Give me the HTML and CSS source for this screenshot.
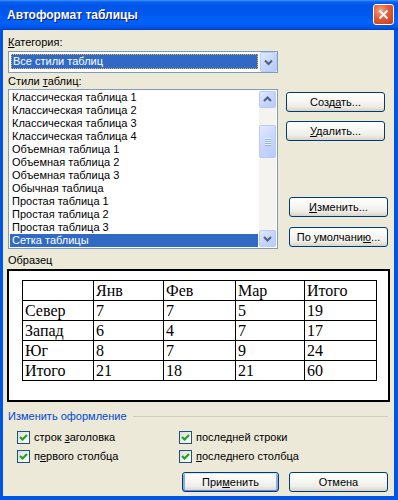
FILE: index.html
```html
<!DOCTYPE html>
<html lang="ru">
<head>
    <meta charset="UTF-8">
    <title>Автоформат таблицы</title>
    <link rel="stylesheet" href="styles.css">
</head>
<body>

    <div class="window">
        <div class="titlebar">
            <span class="title">Автоформат таблицы</span>
            <span class="close">
                <svg width="11" height="11" viewBox="0 0 11 11"><path d="M1.5 1.5 L9.5 9.5 M9.5 1.5 L1.5 9.5" stroke="#fff" stroke-width="2" fill="none"/></svg>
            </span>
        </div>

        <div class="client">
            <div class="top">
                <div class="left">
                    <div class="label"><u>К</u>атегория:</div>
                    <div class="combo">
                        <div class="combo-value"><span>Все стили таблиц</span></div>
                        <div class="arrow-btn combo-btn">
                            <svg width="15" height="18" viewBox="0 0 15 18"><polyline points="4,7.5 7.5,11 11,7.5" stroke="#4d6185" stroke-width="2" fill="none"/></svg>
                        </div>
                    </div>

                    <div class="label label-list">Стили <u>т</u>аблиц:</div>
                    <div class="listbox">
                        <ul class="items">
                            <li>Классическая таблица 1</li>
                            <li>Классическая таблица 2</li>
                            <li>Классическая таблица 3</li>
                            <li>Классическая таблица 4</li>
                            <li>Объемная таблица 1</li>
                            <li>Объемная таблица 2</li>
                            <li>Объемная таблица 3</li>
                            <li>Обычная таблица</li>
                            <li>Простая таблица 1</li>
                            <li>Простая таблица 2</li>
                            <li>Простая таблица 3</li>
                            <li class="selected">Сетка таблицы</li>
                        </ul>
                        <div class="scrollbar">
                            <div class="arrow-btn sb-btn">
                                <svg width="15" height="15" viewBox="0 0 15 15"><polyline points="4,9 7.5,5.5 11,9" stroke="#4d6185" stroke-width="2" fill="none"/></svg>
                            </div>
                            <div class="track">
                                <div class="arrow-btn thumb">
                                    <svg width="8" height="8" viewBox="0 0 8 8">
                                        <path d="M1 0.5 H7 M1 2.5 H7 M1 4.5 H7 M1 6.5 H7" stroke="#eef4fe" stroke-width="1"/>
                                        <path d="M1 1.5 H7 M1 3.5 H7 M1 5.5 H7 M1 7.5 H7" stroke="#8cb0f8" stroke-width="1"/>
                                    </svg>
                                </div>
                            </div>
                            <div class="arrow-btn sb-btn">
                                <svg width="15" height="15" viewBox="0 0 15 15"><polyline points="4,6 7.5,9.5 11,6" stroke="#4d6185" stroke-width="2" fill="none"/></svg>
                            </div>
                        </div>
                    </div>
                </div>

                <div class="side">
                    <button class="btn">Созд<u>а</u>ть...</button>
                    <button class="btn"><u>У</u>далить...</button>
                    <button class="btn btn-low"><u>И</u>зменить...</button>
                    <button class="btn btn-shift">По умолчани<u>ю</u>...</button>
                </div>
            </div>

            <div class="label sample-label">Образец</div>
            <div class="sample">
                <table class="preview">
                    <colgroup>
                        <col style="width: 71px">
                        <col style="width: 70px">
                        <col style="width: 72px">
                        <col style="width: 69px">
                        <col style="width: 72px">
                    </colgroup>
                    <tr><td></td><td>Янв</td><td>Фев</td><td>Мар</td><td>Итого</td></tr>
                    <tr><td>Север</td><td>7</td><td>7</td><td>5</td><td>19</td></tr>
                    <tr><td>Запад</td><td>6</td><td>4</td><td>7</td><td>17</td></tr>
                    <tr><td>Юг</td><td>8</td><td>7</td><td>9</td><td>24</td></tr>
                    <tr><td>Итого</td><td>21</td><td>18</td><td>21</td><td>60</td></tr>
                </table>
            </div>

            <div class="group">
                <span class="group-title">Изменить оформление</span>
                <span class="rule"></span>
            </div>

            <div class="options">
                <label class="check"><span class="box"><svg width="11" height="11" viewBox="0 0 11 11"><polyline points="2,5 4.5,7.5 9,3" stroke="#21a121" stroke-width="2.2" fill="none"/></svg></span><span>строк <u>з</u>аголовка</span></label>
                <label class="check"><span class="box"><svg width="11" height="11" viewBox="0 0 11 11"><polyline points="2,5 4.5,7.5 9,3" stroke="#21a121" stroke-width="2.2" fill="none"/></svg></span><span>последней строки</span></label>
                <label class="check"><span class="box"><svg width="11" height="11" viewBox="0 0 11 11"><polyline points="2,5 4.5,7.5 9,3" stroke="#21a121" stroke-width="2.2" fill="none"/></svg></span><span>п<u>е</u>рвого столбца</span></label>
                <label class="check"><span class="box"><svg width="11" height="11" viewBox="0 0 11 11"><polyline points="2,5 4.5,7.5 9,3" stroke="#21a121" stroke-width="2.2" fill="none"/></svg></span><span><u>п</u>оследнего столбца</span></label>
            </div>

            <div class="actions">
                <button class="btn btn-default">При<u>м</u>енить</button>
                <button class="btn btn-cancel">Отмена</button>
            </div>
        </div>
    </div>

</body>
</html>
```

FILE: styles.css
```css
body {
    margin: 0;
    font-family: "Liberation Sans", Arial, sans-serif;
    font-size: 11px;
    color: #000;
}

.window {
    width: 398px;
    height: 500px;
    background-color: #0055e5;
    display: flex;
    flex-direction: column;
}

/* barra de titulo */
.titlebar {
    height: 30px;
    flex: none;
    display: flex;
    justify-content: space-between;
    align-items: center;
    padding: 0 4px 0 7px;
    background: linear-gradient(to bottom, #3d95ff 0, #0a5ff0 2px, #0054e8 6px, #0058ee 14px, #0062f8 22px, #005af0 26px, #0047d8 29px, #003ec5 30px);
}

.title {
    color: #fff;
    font-weight: bold;
    font-size: 12px;
    text-shadow: 1px 1px #0a1883;
}

.close {
    width: 21px;
    height: 21px;
    box-sizing: border-box;
    align-self: flex-start;
    margin-top: 4px;
    border: 1px solid #fff;
    border-radius: 3px;
    background: radial-gradient(circle at 35% 30%, #f3a58c 0, #e35a36 45%, #c53b18 100%);
    display: flex;
    align-items: center;
    justify-content: center;
}

.client {
    flex: 1;
    margin: 0 4px 4px 3px;
    padding: 6px 6px 0 5px;
    background-color: #ece9d8;
    display: flex;
    flex-direction: column;
}

.label {
    line-height: 13px;
    height: 13px;
}

.top {
    display: flex;
    align-items: flex-start;
}

.left {
    width: 270px;
}

/* lista desplegable */
.combo {
    margin-top: 2px;
    height: 22px;
    box-sizing: border-box;
    border: 1px solid #7f9db9;
    background-color: #fff;
    display: flex;
}

.combo-value {
    flex: 1;
    margin: 2px 2px 3px 2px;
    background-color: #316ac5;
    border: 1px dotted #f5b64a;
    color: #fff;
    line-height: 13px;
    padding-left: 1px;
}

.arrow-btn {
    box-sizing: border-box;
    border: 1px solid #b9cbf3;
    border-radius: 2px;
    background: linear-gradient(135deg, #e1eafe 0, #c8d6fb 50%, #b6cbfa 100%);
    display: flex;
    align-items: center;
    justify-content: center;
}

.combo-btn {
    width: 17px;
    height: 20px;
}

.label-list {
    margin-top: 2px;
    margin-bottom: 1px;
}

.listbox {
    height: 160px;
    box-sizing: border-box;
    border: 1px solid #7f9db9;
    padding: 1px;
    background-color: #fff;
    display: flex;
}

.items {
    flex: 1;
    margin: 0;
    padding: 0;
    list-style: none;
}

.items li {
    height: 13px;
    line-height: 13px;
    padding-left: 2px;
    margin-right: 1px;
    white-space: nowrap;
}

.items .selected {
    background-color: #316ac5;
    color: #fff;
}

.scrollbar {
    width: 17px;
    display: flex;
    flex-direction: column;
    background-color: #f4f3ee;
}

.sb-btn {
    height: 17px;
    flex: none;
}

.track {
    flex: 1;
}

.thumb {
    margin-top: 17px;
    height: 33px;
}

/* botones */
.btn {
    box-sizing: border-box;
    height: 20px;
    padding: 0;
    border: 1px solid #003c74;
    border-radius: 3px;
    background: linear-gradient(to bottom, #fff 0, #f7f7f4 40%, #eeede7 75%, #d8d2c6 100%);
    font: inherit;
    color: #000;
    cursor: pointer;
}

.side {
    display: flex;
    flex-direction: column;
    margin-left: 8px;
    padding-top: 56px;
}

.side .btn {
    width: 99px;
    margin-bottom: 9px;
}

.side .btn-low {
    margin-top: 47px;
    margin-left: 3px;
    margin-bottom: 10px;
}

.side .btn-shift {
    margin-left: 3px;
    margin-bottom: 0;
}

.sample-label {
    margin-top: 5px;
    margin-bottom: 2px;
}

.sample {
    width: 383px;
    height: 133px;
    box-sizing: border-box;
    margin-left: -1px;
    border: 2px solid #000;
    background-color: #fff;
    padding: 9px 0 0 13px;
}

.preview {
    border-collapse: collapse;
    table-layout: fixed;
    width: 355px;
    font-family: "Liberation Serif", "Times New Roman", serif;
    font-size: 16px;
}

.preview td {
    border: 1px solid #000;
    height: 19px;
    padding: 0 0 0 2px;
    line-height: 19px;
    white-space: nowrap;
}

.group {
    margin-top: 8px;
    display: flex;
    align-items: center;
    height: 13px;
    line-height: 13px;
}

.group-title {
    color: #0046d5;
}

.rule {
    flex: 1;
    height: 1px;
    margin-left: 6px;
    background-color: #d0d0bf;
}

.options {
    margin-top: 8px;
    padding-left: 9px;
    display: grid;
    grid-template-columns: 162px 1fr;
    row-gap: 6px;
}

.check {
    display: flex;
    align-items: center;
    height: 13px;
    line-height: 13px;
}

.box {
    width: 13px;
    height: 13px;
    box-sizing: border-box;
    border: 1px solid #1c5180;
    background: linear-gradient(135deg, #dcdcd7 0, #fff 100%);
    margin-right: 4px;
    display: flex;
    align-items: center;
    justify-content: center;
}

.actions {
    margin-top: 9px;
    display: flex;
    justify-content: flex-end;
    gap: 10px;
}

.btn-default {
    width: 97px;
    box-shadow: inset 0 1px #cee7ff, inset 0 -1px #6982ee, inset 2px 0 #89ade4, inset -2px 0 #89ade4;
}

.btn-cancel {
    width: 99px;
}
```
